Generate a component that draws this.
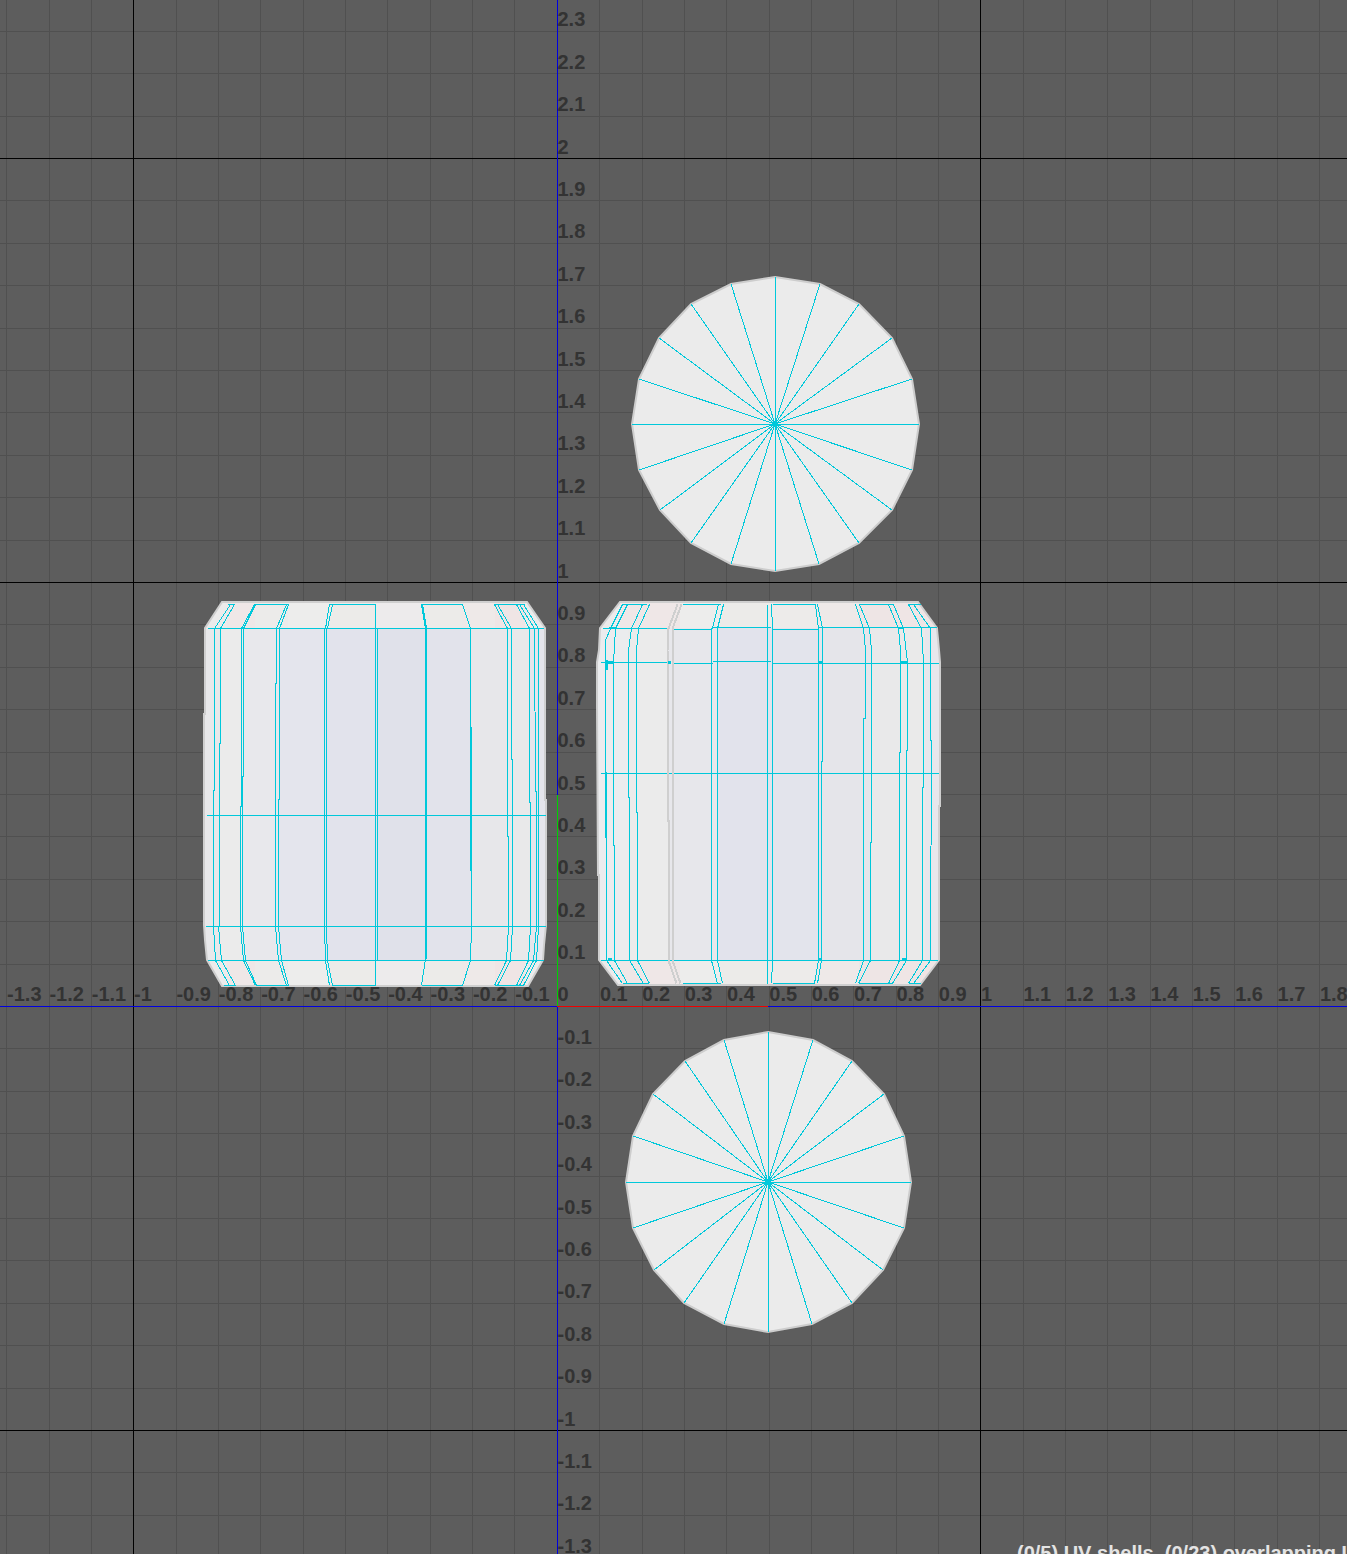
const OX = 557.3, OY = 1006.5, SX = 423.5, SY = 424;
const CYAN = "#00c8da";
const px = (v: number) => Math.floor(v) + 0.5;
const pts = (a: number[][]) => a.map(([x, y]) => `${px(x)},${px(y)}`).join(" ");
const range = (a: number, b: number) => Array.from({ length: b - a + 1 }, (_, i) => a + i);

const hLabels = range(-13, 18).map((i) => ({ i, t: i === 0 ? "0" : Math.abs(i) === 10 ? (i < 0 ? "-1" : "1") : (i / 10).toFixed(1) }));
const vLabels = range(-13, 23).filter((i) => i !== 0).map((i) => ({ i, t: Math.abs(i) === 10 ? (i < 0 ? "-1" : "1") : i === 20 ? "2" : (i / 10).toFixed(1) }));

const leftOutline = "222,602 527,602 545,628 545,800 546,800 546,925 544,945 543,960 528,986 222,986 207,960 205,940 204,925 204,714 205,714 205,628";
const rightOutline = "620,602 918,602 937,628 939,650 940,662 940,806 939,806 939,960 920,985 618,985 599,960 599,875 598,875 597,706 597,662 599,650 600,628";

const leftBody: [number, number, string][] = [
  [200, 20, "#e8e8ea"], [220, 23, "#ebebeb"], [243, 36, "#e8e8ec"], [279, 48, "#e4e5ed"], [327, 50, "#e2e3ec"],
  [377, 49, "#e0e1ea"], [426, 45, "#e2e3eb"], [471, 36, "#e7e7ea"], [507, 23, "#e9e9ea"], [530, 20, "#e5e5eb"],
];
const leftCap: [number, number, string][] = [
  [200, 27, "#ecebeb"], [227, 28, "#efe7e7"], [255, 33, "#ecebea"], [288, 42, "#ededec"], [330, 46, "#ecebe9"],
  [376, 45, "#edebec"], [421, 41, "#ecebe9"], [462, 33, "#eee9e8"], [495, 30, "#efe5e5"], [525, 25, "#ecebeb"],
];
const rightBody: [number, number, string][] = [
  [595, 33, "#ebecee"], [628, 40, "#ebebeb"], [668, 50, "#e7e7eb"], [718, 54, "#e2e3ec"], [772, 49, "#e3e4ec"],
  [821, 49, "#e5e5ea"], [870, 30, "#e9e9ea"], [900, 25, "#eaeaea"], [925, 20, "#e7e7ec"],
];
const rightCap: [number, number, string][] = [
  [595, 25, "#ecebeb"], [620, 60, "#efe7e7"], [680, 40, "#ededec"], [720, 52, "#ecebe9"], [772, 43, "#edebea"],
  [815, 44, "#eee9e8"], [859, 34, "#eee5e5"], [893, 50, "#efe5e5"],
];

const leftLines: number[][][] = [
  [[230, 604], [214, 628], [214, 790], [213, 790], [213, 926], [215, 960], [229, 985]],
  [[234, 604], [220, 628], [220, 743], [219, 743], [219, 926], [218, 926], [221, 960], [235, 985]],
  [[254, 604], [241, 628], [241, 806], [240, 806], [240, 926], [243, 960], [255, 985]],
  [[255, 604], [243, 628], [243, 776], [242, 776], [242, 926], [245, 960], [256, 985]],
  [[286, 604], [276, 628], [276, 683], [275, 683], [275, 926], [278, 960], [286, 985]],
  [[288, 604], [279, 628], [279, 799], [278, 799], [278, 926], [281, 960], [288, 985]],
  [[329, 604], [325, 628], [324, 628], [324, 926], [325, 960], [329, 985]],
  [[332, 604], [327, 628], [326, 628], [326, 926], [327, 960], [332, 985]],
  [[375, 604], [375, 985]],
  [[377, 628], [377, 960]],
  [[421, 604], [425, 628], [425, 958], [421, 985]],
  [[422, 604], [426, 628], [426, 958]],
  [[462, 604], [470, 628], [470, 726], [470, 870], [471, 870], [471, 926], [470, 960], [462, 985]],
  [[471, 726], [471, 870]],
  [[494, 604], [507, 628], [507, 836], [508, 836], [508, 926], [506, 960], [494, 985]],
  [[497, 604], [511, 628], [511, 759], [512, 759], [512, 926], [510, 960], [497, 985]],
  [[516, 604], [529, 628], [529, 802], [530, 802], [530, 926], [528, 960], [516, 985]],
  [[519, 604], [534, 628], [535, 791], [536, 791], [536, 926], [533, 960], [519, 985]],
  [[523, 604], [538, 628], [538, 926], [536, 960], [523, 985]],
  [[227, 604], [234, 604]], [[254, 604], [288, 604]], [[329, 604], [375, 604]], [[420, 604], [462, 604]], [[494, 604], [524, 604]],
  [[207, 628], [543, 628]], [[206, 815], [545, 815]], [[205, 926], [545, 926]], [[207, 960], [543, 960]],
  [[223, 985], [235, 985]], [[255, 985], [288, 985]], [[331, 985], [375, 985]], [[421, 985], [462, 985]], [[494, 985], [523, 985]],
];

const rightLines: number[][][] = [
  [[622, 604], [610, 628], [605, 640], [605, 837], [606, 837], [606, 960], [622, 983]],
  [[606, 771], [606, 837]],
  [[627, 604], [615, 628], [613, 662], [613, 845], [614, 845], [614, 960], [627, 983]],
  [[642, 604], [631, 628], [628, 650], [628, 797], [629, 797], [629, 960], [643, 983]],
  [[649, 604], [638, 628], [636, 650], [636, 812], [637, 812], [637, 960], [649, 983]],
  [[718, 604], [712, 628], [711, 628], [711, 960], [717, 983]],
  [[723, 604], [717, 628], [717, 960], [722, 983]],
  [[767, 604], [767, 983]],
  [[771, 604], [772, 628], [772, 960], [771, 983]],
  [[815, 604], [818, 628], [818, 960], [814, 983]],
  [[817, 604], [822, 628], [822, 761], [821, 761], [821, 960], [817, 983]],
  [[855, 604], [863, 628], [865, 650], [865, 718], [863, 718], [863, 960], [855, 983]],
  [[859, 604], [869, 628], [871, 650], [871, 842], [870, 842], [870, 960], [858, 983]],
  [[888, 604], [898, 628], [900, 650], [900, 752], [899, 752], [899, 960], [888, 983]],
  [[893, 604], [903, 628], [907, 662], [907, 750], [906, 750], [906, 960], [892, 983]],
  [[908, 604], [921, 628], [923, 662], [923, 787], [922, 787], [922, 960], [908, 983]],
  [[913, 604], [930, 628], [930, 740], [931, 740], [930, 960], [913, 983]],
  [[621, 604], [646, 604]], [[682, 604], [720, 604]], [[772, 604], [814, 604]], [[859, 604], [893, 604]], [[908, 604], [920, 604]],
  [[602, 628], [668, 628]], [[672, 629], [711, 629]], [[711, 627], [770, 627]], [[772, 629], [818, 629]], [[818, 627], [936, 627]],
  [[600, 662], [668, 662]], [[672, 663], [712, 663]], [[712, 661], [770, 661]], [[772, 663], [938, 663]],
  [[600, 773], [938, 773]], [[600, 960], [937, 960]],
  [[622, 983], [648, 983]], [[682, 983], [720, 983]], [[772, 983], [814, 983]], [[858, 983], [892, 983]], [[908, 983], [920, 983]],
];

const seams: number[][][] = [
  [[677, 604], [668, 628], [667, 650], [667, 820], [668, 820], [668, 960], [676, 983]],
  [[681, 604], [672, 628], [672, 960], [680, 983]],
];

const blobs = [[605, 661, 8, 3], [668, 661, 3, 3], [818, 661, 4, 3], [900, 661, 7, 3], [609, 627, 6, 2], [899, 627, 5, 2], [606, 660, 2, 10], [608, 958, 4, 2], [819, 958, 3, 2], [902, 958, 4, 2]];

const topFan = [[775, 277], [820, 284], [859, 304], [892, 338], [912, 379], [919, 424], [912, 470], [892, 510], [859, 543], [819, 564], [775, 571], [731, 564], [691, 543], [660, 510], [639, 470], [632, 424], [639, 379], [659, 338], [691, 304], [731, 284]];
const botFan = [[768, 1032], [813, 1040], [852, 1061], [884, 1094], [904, 1136], [911, 1182], [904, 1228], [883, 1270], [852, 1303], [812, 1324], [768, 1332], [724, 1324], [684, 1303], [654, 1270], [633, 1228], [626, 1182], [633, 1136], [653, 1094], [685, 1061], [724, 1040]];

function Fan({ c, v }: { c: [number, number]; v: number[][] }) {
  return (
    <g>
      <polygon points={v.map((p) => p.join(",")).join(" ")} fill="#ebebeb" stroke="#cdcdcd" strokeWidth="2" />
      <g stroke={CYAN} strokeWidth="1" shapeRendering="crispEdges">
        {v.map(([x, y], i) => (
          <line key={i} x1={c[0]} y1={c[1]} x2={x} y2={y} />
        ))}
      </g>
      <circle cx={c[0]} cy={c[1]} r="3" fill={CYAN} />
    </g>
  );
}

function Shell({ id, outline, body, cap, lines, top, bot }: { id: string; outline: string; body: [number, number, string][]; cap: [number, number, string][]; lines: number[][][]; top: number; bot: number }) {
  return (
    <g>
      <clipPath id={id}>
        <polygon points={outline} />
      </clipPath>
      <g clipPath={`url(#${id})`} shapeRendering="crispEdges">
        {body.map(([x, w, f]) => (
          <rect key={x} x={x} y={top} width={w} height={bot - top} fill={f} />
        ))}
        {cap.map(([x, w, f]) => (
          <g key={x}>
            <rect x={x} y="600" width={w} height={top - 600} fill={f} />
            <rect x={x} y={bot} width={w} height={990 - bot} fill={f} />
          </g>
        ))}
      </g>
      <polygon points={outline} fill="none" stroke="#cfcfcf" strokeWidth="2" />
      <g fill="none" stroke={CYAN} strokeWidth="1" shapeRendering="crispEdges">
        {lines.map((l, i) => (
          <polyline key={i} points={pts(l)} />
        ))}
      </g>
    </g>
  );
}

export default function App() {
  return (
    <div className="relative h-[1554px] w-[1347px] overflow-hidden bg-[#5d5d5d] font-['Liberation_Sans',Arial,sans-serif]">
      <svg width="1347" height="1554" viewBox="0 0 1347 1554" className="block">
        <g stroke="#505050" strokeWidth="1" shapeRendering="crispEdges">
          {range(-14, 19).map((i) => (
            <line key={i} x1={px(OX + (i * SX) / 10)} x2={px(OX + (i * SX) / 10)} y1="0" y2="1554" />
          ))}
          {range(-14, 24).map((i) => (
            <line key={i} y1={px(OY - (i * SY) / 10)} y2={px(OY - (i * SY) / 10)} x1="0" x2="1347" />
          ))}
        </g>
        <g stroke="#000" strokeWidth="1" shapeRendering="crispEdges">
          <line x1="133.5" x2="133.5" y1="0" y2="1554" />
          <line x1="980.5" x2="980.5" y1="0" y2="1554" />
          <line y1="158.5" y2="158.5" x1="0" x2="1347" />
          <line y1="582.5" y2="582.5" x1="0" x2="1347" />
          <line y1="1430.5" y2="1430.5" x1="0" x2="1347" />
        </g>
        <g strokeWidth="1" shapeRendering="crispEdges">
          <line x1="0" x2="1347" y1="1006.5" y2="1006.5" stroke="#0000e0" />
          <line x1="557.5" x2="557.5" y1="0" y2="1554" stroke="#0000e0" />
          <line x1="557.5" x2="557.5" y1="795" y2="1006" stroke="#00d000" />
          <line x1="557" x2="768" y1="1006.5" y2="1006.5" stroke="#f00000" />
        </g>
        <Fan c={[775, 424]} v={topFan} />
        <Fan c={[768, 1182]} v={botFan} />
        <Shell id="left" outline={leftOutline} body={leftBody} cap={leftCap} lines={leftLines} top={628} bot={960} />
        <Shell id="right" outline={rightOutline} body={rightBody} cap={rightCap} lines={rightLines} top={628} bot={960} />
        <g fill="none" stroke="#cfcfcf" strokeWidth="2" shapeRendering="crispEdges">
          {seams.map((l, i) => (
            <polyline key={i} points={pts(l)} />
          ))}
        </g>
        <g fill={CYAN} shapeRendering="crispEdges">
          {blobs.map(([x, y, w, h], i) => (
            <rect key={i} x={x} y={y} width={w} height={h} />
          ))}
        </g>
      </svg>
      {hLabels.map(({ i, t }) => (
        <span
          key={`h${i}`}
          className="absolute whitespace-pre text-[20px] font-bold leading-none text-[#333333]"
          style={{ left: OX + (i * SX) / 10 + 0.3, top: 984 }}
        >
          {t}
        </span>
      ))}
      {vLabels.map(({ i, t }) => (
        <span
          key={`v${i}`}
          className="absolute whitespace-pre text-[20px] font-bold leading-none text-[#333333]"
          style={{ left: 557.5, top: OY - (i * SY) / 10 - 22 }}
        >
          {t}
        </span>
      ))}
      <span className="absolute left-[1017px] top-[1543px] whitespace-pre text-[20px] font-bold leading-none text-[#e4e4e4]">
        (0/5) UV shells, (0/23) overlapping UVs
      </span>
    </div>
  );
}
